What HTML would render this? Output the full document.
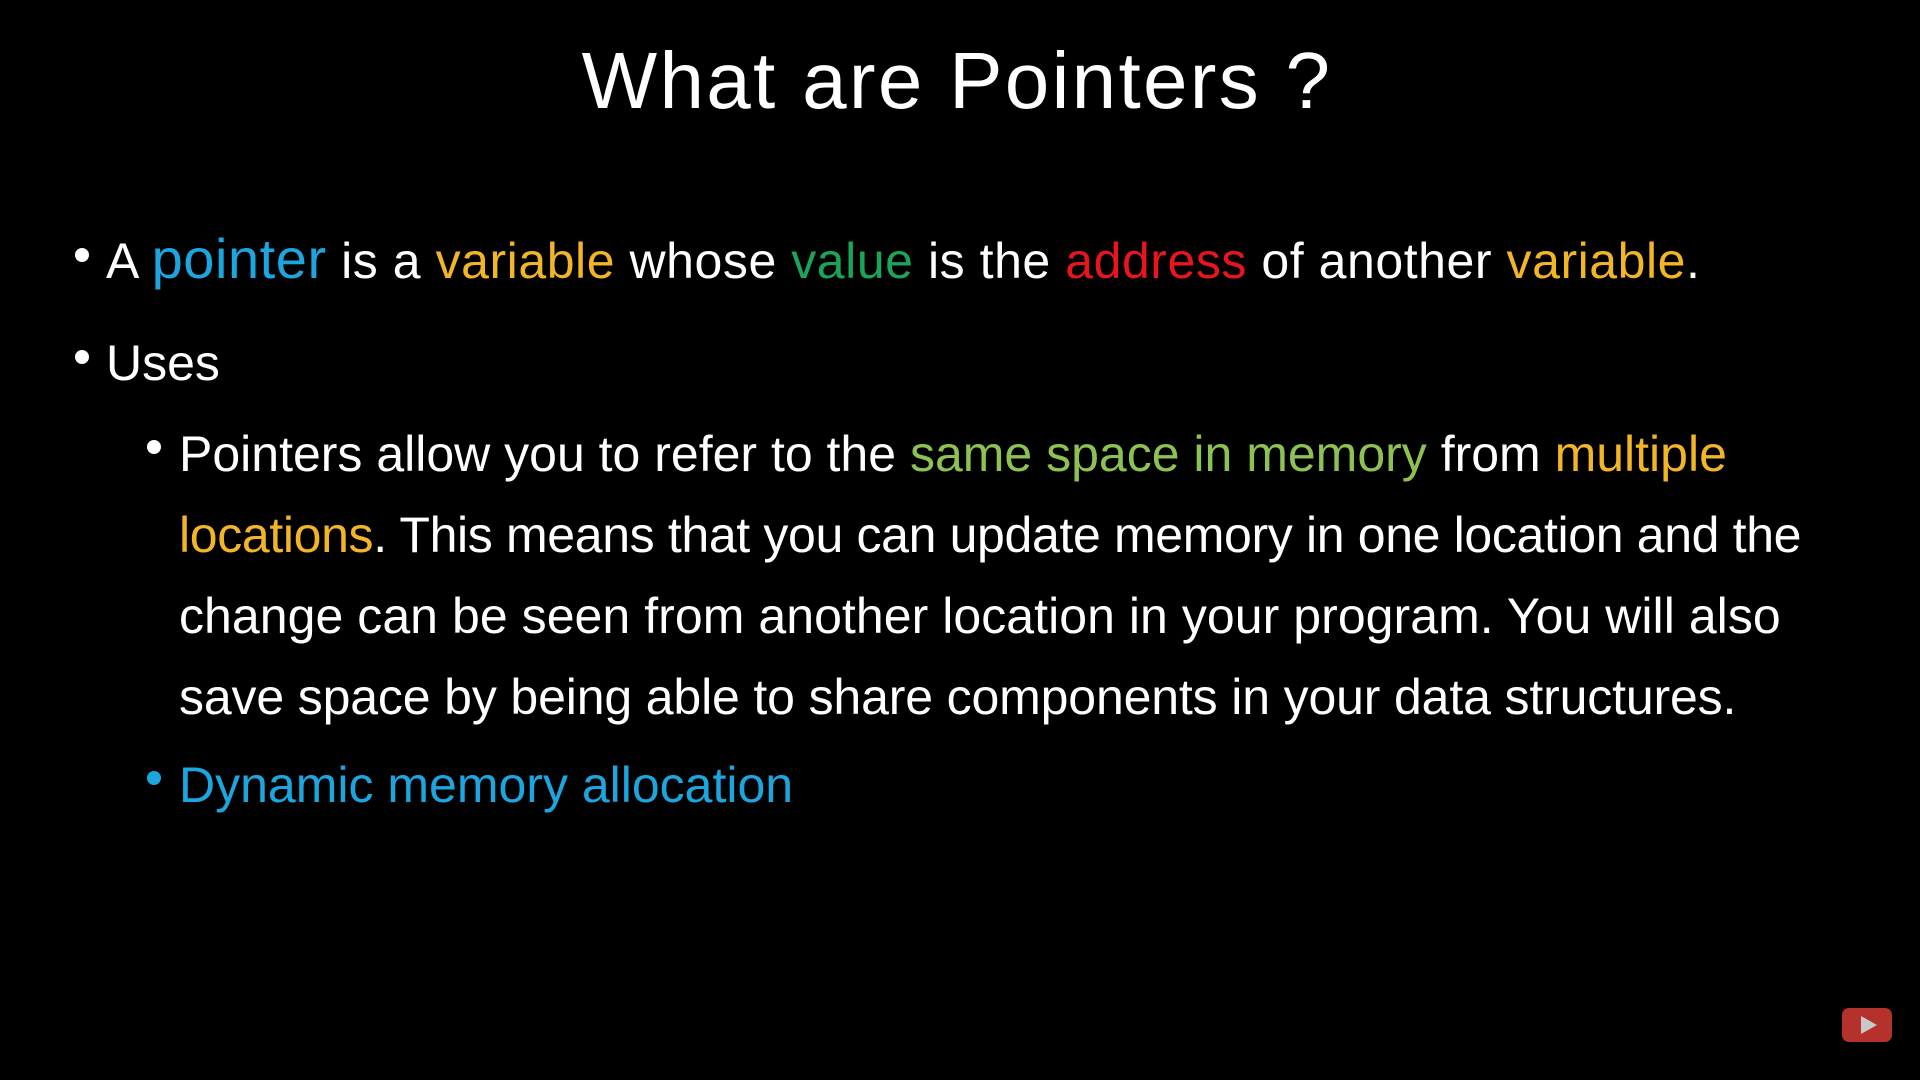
<!DOCTYPE html>
<html><head><meta charset="utf-8"><style>
html,body{margin:0;padding:0;background:#000;width:1920px;height:1080px;overflow:hidden}
body{position:relative;font-family:"Liberation Sans",sans-serif;color:#fff}
.l{position:absolute;white-space:nowrap;line-height:1;font-size:50px;letter-spacing:0px}
.t{position:absolute;left:0;width:1914px;text-align:center;top:41px;font-size:80px;line-height:1;letter-spacing:2.3px}
.b{position:absolute;width:14px;height:14px;border-radius:50%;background:#fff}
.bl{color:#1ca6e0}.y{color:#f2b526}.g{color:#1aa55a}.r{color:#e8141e}.lg{color:#8dc253}
</style></head><body>
<div class="t">What are Pointers ?</div>
<div class="b" style="left:75px;top:248px"></div>
<div class="l" style="left:106px;top:231px;letter-spacing:0.55px">A <span class="bl" style="font-size:56px">pointer</span> is a <span class="y">variable</span> whose <span class="g">value</span> is the <span class="r">address</span> of another <span class="y">variable</span>.</div>
<div class="b" style="left:75px;top:350px"></div>
<div class="l" style="left:106px;top:338px">Uses</div>
<div class="b" style="left:147px;top:440px"></div>
<div class="l" style="left:179px;top:429px">Pointers allow you to refer to the <span class="lg">same space in memory</span> from <span class="y">multiple</span></div>
<div class="l" style="left:179px;top:510px;letter-spacing:-0.35px"><span class="y">locations</span>. This means that you can update memory in one location and the</div>
<div class="l" style="left:179px;top:591px;letter-spacing:0.05px">change can be seen from another location in your program. You will also</div>
<div class="l" style="left:179px;top:672px;letter-spacing:-0.15px">save space by being able to share components in your data structures.</div>
<div class="b" style="left:147px;top:771px;background:#1ca6e0"></div>
<div class="l bl" style="left:179px;top:760px">Dynamic memory allocation</div>
<svg style="position:absolute;left:1842px;top:1008px" width="50" height="34" viewBox="0 0 50 34"><rect x="0" y="0" width="50" height="34" rx="7" fill="#b5312b"/><path d="M19 8 L35 17 L19 26 Z" fill="#c8c8c8"/></svg>
</body></html>
